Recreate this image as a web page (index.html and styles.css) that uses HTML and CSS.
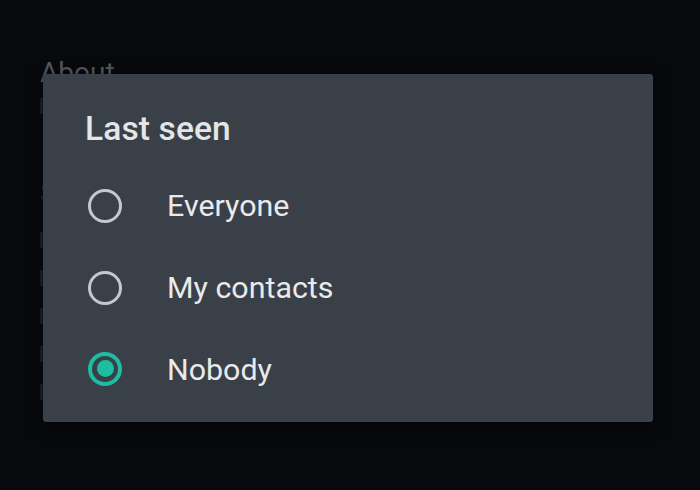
FILE: index.html
```html
<!DOCTYPE html>
<html>
<head>
<meta charset="utf-8">
<link rel="stylesheet" href="styles.css">
</head>
<body>
<div class="screen">
  <div class="backdrop">
    <div class="bg-title">About</div>
    <div class="bg-line short"></div>
    <div class="bg-head">Status</div>
    <div class="bg-line"></div>
    <div class="bg-line"></div>
    <div class="bg-line"></div>
    <div class="bg-line"></div>
    <div class="bg-line"></div>
  </div>
  <div class="dialog">
    <div class="title">Last seen</div>
    <div class="options">
      <div class="option">
        <span class="radio"></span>
        <span class="label">Everyone</span>
      </div>
      <div class="option">
        <span class="radio"></span>
        <span class="label">My contacts</span>
      </div>
      <div class="option">
        <span class="radio checked"><span class="dot"></span></span>
        <span class="label">Nobody</span>
      </div>
    </div>
  </div>
</div>
</body>
</html>
```
FILE: styles.css
```css
html, body {
  margin: 0;
  padding: 0;
  background: #07090c;
}
.screen {
  position: relative;
  width: 700px;
  height: 490px;
  overflow: hidden;
  background: #07090c;
  font-family: Roboto, "Noto Sans", sans-serif;
}
.backdrop {
  padding: 56px 0 0 40px;
  display: flex;
  flex-direction: column;
}
.bg-title {
  font-size: 28px;
  line-height: 34px;
  color: #53575c;
}
.bg-head {
  font-size: 28px;
  line-height: 34px;
  color: #24282d;
  margin-top: 62px;
}
.bg-line {
  width: 200px;
  height: 16px;
  margin-top: 22px;
  background: #1c2025;
}
.bg-line.short {
  margin-top: 8px;
}
.dialog {
  position: absolute;
  left: 43px;
  top: 74px;
  width: 610px;
  height: 348px;
  box-sizing: border-box;
  background: #3a4047;
  border-radius: 3px;
  box-shadow: 0 4px 16px rgba(0, 0, 0, 0.5);
  padding: 35px 0 0 42px;
}
.title {
  font-size: 33.6px;
  line-height: 40px;
  font-weight: 500;
  color: #e3e5e7;
  letter-spacing: 0.1px;
}
.options {
  margin-top: 16px;
  display: flex;
  flex-direction: column;
}
.option {
  height: 82px;
  display: flex;
  align-items: center;
}
.radio {
  width: 34px;
  height: 34px;
  box-sizing: border-box;
  border: 3px solid #c6c9cc;
  border-radius: 50%;
  margin-left: 3px;
  display: flex;
  align-items: center;
  justify-content: center;
}
.radio.checked {
  border: 4px solid #1ebda3;
  margin-top: -3px;
}
.dot {
  width: 17px;
  height: 17px;
  border-radius: 50%;
  background: #1ebda3;
}
.label {
  margin-left: 45px;
  font-size: 30.4px;
  line-height: 36px;
  color: #e8eaec;
}
```
